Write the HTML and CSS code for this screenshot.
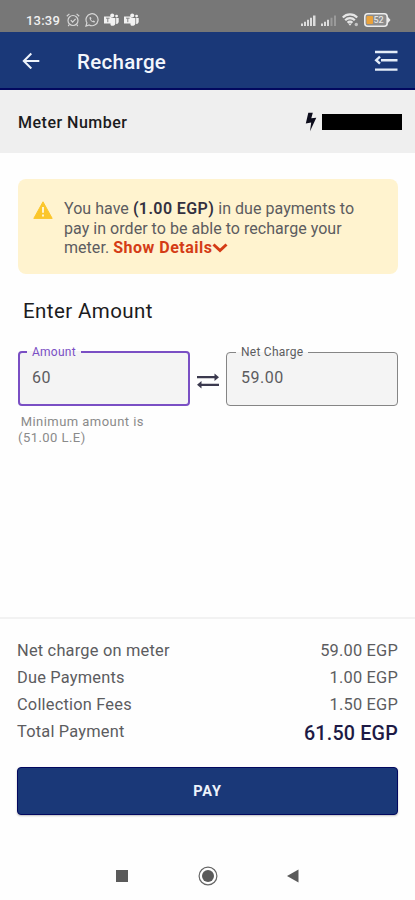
FILE: index.html
```html
<!DOCTYPE html>
<html lang="en">
<head>
    <meta charset="UTF-8" />
    <title>Recharge</title>
    <meta name="viewport" content="width=device-width, initial-scale=1.0" />
    <link rel="stylesheet" href="styles.css">
</head>
<body>
    <div class="status-bar">
        <div class="status-left">
            <span class="time">13:39</span>
            <svg width="14" height="14" viewBox="0 0 14 14" fill="none" stroke="#d6d6d6" stroke-width="1.2">
                <circle cx="7" cy="7.5" r="5" />
                <path d="M.8 3.2 3.4.9M13.2 3.2 10.6.9M4.8 7.2l1.8 1.9 3-3.2M3.3 11.7 2.2 13M10.7 11.7l1.1 1.3" />
            </svg>
            <svg width="14" height="14" viewBox="0 0 14 14" fill="none" stroke="#d6d6d6" stroke-width="1.2">
                <path d="M1 13l.9-3.2A6 6 0 1 1 4.2 12z" />
                <path d="M4.6 4.2c-.5 2.5 2.4 5.5 5 5.2l.4-1.2-1.6-.8-.8.8C6.6 7.7 6 7 5.8 6.3l.7-.7-.7-1.5z" fill="#d6d6d6" stroke="none" />
            </svg>
            <svg width="15" height="14" viewBox="0 0 15 14" fill="#f2f2f2">
                <circle cx="8.2" cy="2.6" r="2" /><circle cx="12.6" cy="3.1" r="1.4" />
                <path d="M6.5 5h5v5.5a3 3 0 0 1-5 1.500zM12 5h2.700v4a2.500 2.500 0 0 1-2.700 2zM0 3.500h7.500v7H0z" />
                <path d="M2 5.200h3.600M3.800 5.200v4" stroke="#858585" stroke-width="1" />
                <path d="M11.800 5v6" stroke="#858585" stroke-width=".5" />
            </svg>
            <svg width="15" height="14" viewBox="0 0 15 14" fill="#f2f2f2">
                <circle cx="8.2" cy="2.6" r="2" /><circle cx="12.6" cy="3.1" r="1.4" />
                <path d="M6.500 5h5v5.500a3 3 0 0 1-5 1.500zM12 5h2.700v4a2.500 2.500 0 0 1-2.700 2zM0 3.500h7.500v7H0z" />
                <path d="M2 5.200h3.600M3.800 5.200v4" stroke="#858585" stroke-width="1" />
                <path d="M11.800 5v6" stroke="#858585" stroke-width=".5" />
            </svg>
        </div>
        <div class="status-right">
            <svg width="15" height="11" viewBox="0 0 15 11" fill="#dcdcdc">
                <path d="M0 8.5h2V11H0zM3 6.800h2V11H3zM6 4.800h2V11H6zM9 2.800h2V11H9zM12 .5h2.500V11H12z" />
            </svg>
            <svg width="16" height="11" viewBox="0 0 16 11" fill="#dcdcdc">
                <path d="M0 8.500h2V11H0zM3 6.800h2V11H3zM6 4.800h2V11H6z" />
                <path d="M9.500 2.800h2V11h-2zM13 .5h2V11h-2z" fill="#9a9a9a" />
            </svg>
            <svg width="17" height="14" viewBox="0 0 17 14" fill="none" stroke="#e6e6e6" stroke-width="2.200">
                <path d="M.8 4.500a10 10 0 0 1 14.400 0M3.200 7.200a6.600 6.600 0 0 1 9.600 0M5.600 9.700a3.300 3.300 0 0 1 4.800 0" />
                <path d="M6.200 10.500h3.600L8 12.800z" fill="#e6e6e6" stroke="none" />
                <circle cx="14.300" cy="11.500" r="1.700" fill="#c4c4c4" stroke="none" />
            </svg>
            <svg width="27" height="14" viewBox="0 0 27 14">
                <rect x=".8" y=".8" width="22.400" height="12.400" rx="3" fill="#8d8d8d" stroke="#ececec" stroke-width="1.600" />
                <path d="M24 4l2.500 3L24 10z" fill="#ececec" />
                <rect x="2.500" y="3" width="6.500" height="8" rx="1" fill="#eaa23b" />
                <text x="9.500" y="10.300" font-family="Roboto, sans-serif" font-size="9" font-weight="500" fill="#e4e4e4">52</text>
            </svg>
        </div>
    </div>

    <div class="app-bar">
        <svg width="18" height="18" viewBox="0 0 18 18" fill="none" stroke="#eef3fb" stroke-width="2">
            <path d="M17.300 10H2M9.300 2.500 1.800 10l7.500 7.500" />
        </svg>
        <h1>Recharge</h1>
        <svg width="24" height="22" viewBox="0 0 24 22" fill="none" stroke="#e3ecf8" stroke-width="2.400">
            <path d="M1 3h22.500M7 11.200h16.500M1 20.600h22.500M6 7.700 2.200 11.200 6 14.700" />
        </svg>
    </div>

    <div class="meter">
        <span>Meter Number</span>
        <div class="meter-value">
            <svg width="12" height="20" viewBox="0 0 12 20" fill="#0d0d1c">
                <path d="M3.300.8h4.500L6.300 6.300l5-.6L5 19.200l1.200-8.600-5.400.9z" />
            </svg>
            <div class="redacted"></div>
        </div>
    </div>

    <main>
        <div class="alert">
            <svg width="20" height="18" viewBox="0 0 20 18">
                <path d="M10 .8 19.200 17.400H.8z" fill="#fbc62b" stroke="#fbc62b" stroke-width="1" stroke-linejoin="round" />
                <path d="M10 6v5.800M10 13.400v2" stroke="#fff3cf" stroke-width="2" />
            </svg>
            <p>You have <b>(1.00 EGP)</b> in due payments to<br>pay in order to be able to recharge your<br>meter. <a class="details">Show Details<svg width="16" height="10" viewBox="0 0 16 10" fill="none" stroke="#d43c16" stroke-width="3"><path d="M1.500 1.500 8 7.500l6.500-6" /></svg></a></p>
        </div>

        <h2>Enter Amount</h2>

        <div class="fields">
            <fieldset class="field active">
                <legend>Amount</legend>
                <div class="value">60</div>
            </fieldset>
            <svg width="22" height="16" viewBox="0 0 22 16" fill="none" stroke="#3b394e" stroke-width="2.200">
                <path d="M0 4.200h19M3 11.800h19" />
                <path d="M17.500.5 22 4.200l-4.500 3.700zM4.500 8.100 0 11.800l4.500 3.700z" fill="#3b394e" stroke="none" />
            </svg>
            <fieldset class="field">
                <legend>Net Charge</legend>
                <div class="value">59.00</div>
            </fieldset>
        </div>
        <p class="hint">&nbsp;Minimum amount is<br>(51.00 L.E)</p>
    </main>

    <div class="summary">
        <div class="row"><span>Net charge on meter</span><span>59.00 EGP</span></div>
        <div class="row"><span>Due Payments</span><span>1.00 EGP</span></div>
        <div class="row"><span>Collection Fees</span><span>1.50 EGP</span></div>
        <div class="row"><span>Total Payment</span><span class="total">61.50 EGP</span></div>
        <button>PAY</button>
    </div>

    <div class="nav-bar">
        <svg width="20" height="20" viewBox="0 0 20 20"><rect x="4" y="4" width="12" height="12" fill="#5a5a5a" /></svg>
        <svg width="20" height="20" viewBox="0 0 20 20">
            <circle cx="10" cy="10" r="8.900" fill="none" stroke="#666" stroke-width="1.200" />
            <circle cx="10" cy="10" r="6" fill="#5a5a5a" />
        </svg>
        <svg width="20" height="20" viewBox="0 0 20 20"><path d="M4 10 15.500 3.500v13z" fill="#5a5a5a" /></svg>
    </div>
</body>
</html>
```
FILE: styles.css
```css
:root {
    --primary-color: #1a3878;
    --primary-dark: #02085f;
    --accent-color: #7a4fc4;
    --text-color: #5c5c5f;
    --dark-text: #1b1b20;
    --danger-color: #d43c16;
}

* {
    box-sizing: border-box;
}

body {
    margin: 0;
    height: 900px;
    display: flex;
    flex-direction: column;
    font-family: Roboto, sans-serif;
    color: var(--text-color);
    background: #fefefe;
    overflow: hidden;
}

svg {
    display: block;
    flex-shrink: 0;
}

h1, h2, p {
    margin: 0;
}

/* Phone status bar */
.status-bar {
    height: 32px;
    padding: 8px 24px 0 26px;
    display: flex;
    justify-content: space-between;
    align-items: center;
    background: #777;
}

.status-left {
    display: flex;
    align-items: center;
    gap: 5px;
}

.time {
    width: 35px;
    font-size: 13px;
    font-weight: 500;
    letter-spacing: 0.2px;
    color: #f0f0f0;
}

.status-right {
    display: flex;
    align-items: center;
    gap: 5px;
}

/* Header */
.app-bar {
    height: 58px;
    padding: 0 17px 0 22px;
    display: flex;
    align-items: center;
    background: var(--primary-color);
    border-bottom: 2px solid var(--primary-dark);
}

.app-bar h1 {
    flex: 1;
    margin-left: 37px;
    padding-top: 3px;
    font-size: 20.5px;
    line-height: 24px;
    font-weight: 500;
    letter-spacing: 0.3px;
    color: #f3f6fc;
}

.meter {
    height: 63px;
    padding: 0 13px 0 18px;
    display: flex;
    justify-content: space-between;
    align-items: center;
    background: #efefef;
    font-size: 16px;
    font-weight: 500;
    letter-spacing: 0.5px;
    color: var(--dark-text);
}

.meter span {
    padding-top: 2px;
}

.meter-value {
    display: flex;
    align-items: center;
    gap: 5px;
}

.redacted {
    width: 80px;
    height: 16px;
    background: #000;
}

main {
    flex: 1;
    padding: 26px 17px 0 18px;
}

/* Due payments notice */
.alert {
    height: 95px;
    padding: 20px 15px;
    display: flex;
    gap: 11px;
    background: #fff3cf;
    border-radius: 8px;
}

.alert > svg {
    margin-top: 2px;
}

.alert p {
    font-size: 16px;
    line-height: 19.5px;
    letter-spacing: 0.04px;
    white-space: nowrap;
}

.alert b {
    font-weight: 600;
    letter-spacing: 0.4px;
    color: #33303f;
}

.details {
    font-weight: 700;
    letter-spacing: 0.5px;
    color: var(--danger-color);
}

.details svg {
    display: inline-block;
}

h2 {
    margin: 25px 0 0 5px;
    font-size: 20.5px;
    line-height: 24px;
    font-weight: 400;
    letter-spacing: 0.4px;
    color: var(--dark-text);
}

/* Amount fields */
.fields {
    margin-top: 22px;
    display: flex;
    align-items: center;
    justify-content: space-between;
}

.fields > svg {
    margin-top: 10px;
}

.field {
    width: 172px;
    height: 61px;
    min-width: 0;
    margin: 0;
    padding: 0 9px;
    border: 1px solid #858585;
    border-radius: 4px;
    background: #f4f4f4;
}

.field.active {
    border: 2px solid var(--accent-color);
    padding: 0 7px;
}

.field legend {
    padding: 0 5px;
    font-size: 12px;
    line-height: 14px;
    letter-spacing: 0.25px;
}

.field.active legend {
    color: var(--accent-color);
}

.field .value {
    padding: 9px 5px 0;
    font-size: 16px;
    line-height: 20px;
    letter-spacing: 0.5px;
}

.hint {
    margin-top: 8px;
    font-size: 13px;
    line-height: 16px;
    letter-spacing: 0.45px;
    text-indent: -1px;
    color: #8a8a8a;
}

/* Payment summary */
.summary {
    height: 234px;
    padding: 18px 17px 0 17px;
    border-top: 2px solid #f2f2f2;
}

.row {
    height: 27px;
    display: flex;
    justify-content: space-between;
    align-items: center;
    font-size: 16.4px;
    letter-spacing: 0.2px;
}

.total {
    padding-top: 4px;
    font-size: 19.7px;
    font-weight: 500;
    color: #1d1a45;
}

button {
    display: block;
    width: 381px;
    height: 48px;
    margin-top: 22px;
    border: 1px solid var(--primary-dark);
    border-radius: 4px;
    background: var(--primary-color);
    box-shadow: 0 1px 2px rgba(0, 0, 0, 0.25);
    font-family: inherit;
    font-size: 14.5px;
    font-weight: 700;
    letter-spacing: 0.8px;
    color: #edf3fb;
}

/* Android navigation */
.nav-bar {
    height: 49px;
    padding: 0 112px;
    display: flex;
    justify-content: space-between;
    align-items: center;
}
```
